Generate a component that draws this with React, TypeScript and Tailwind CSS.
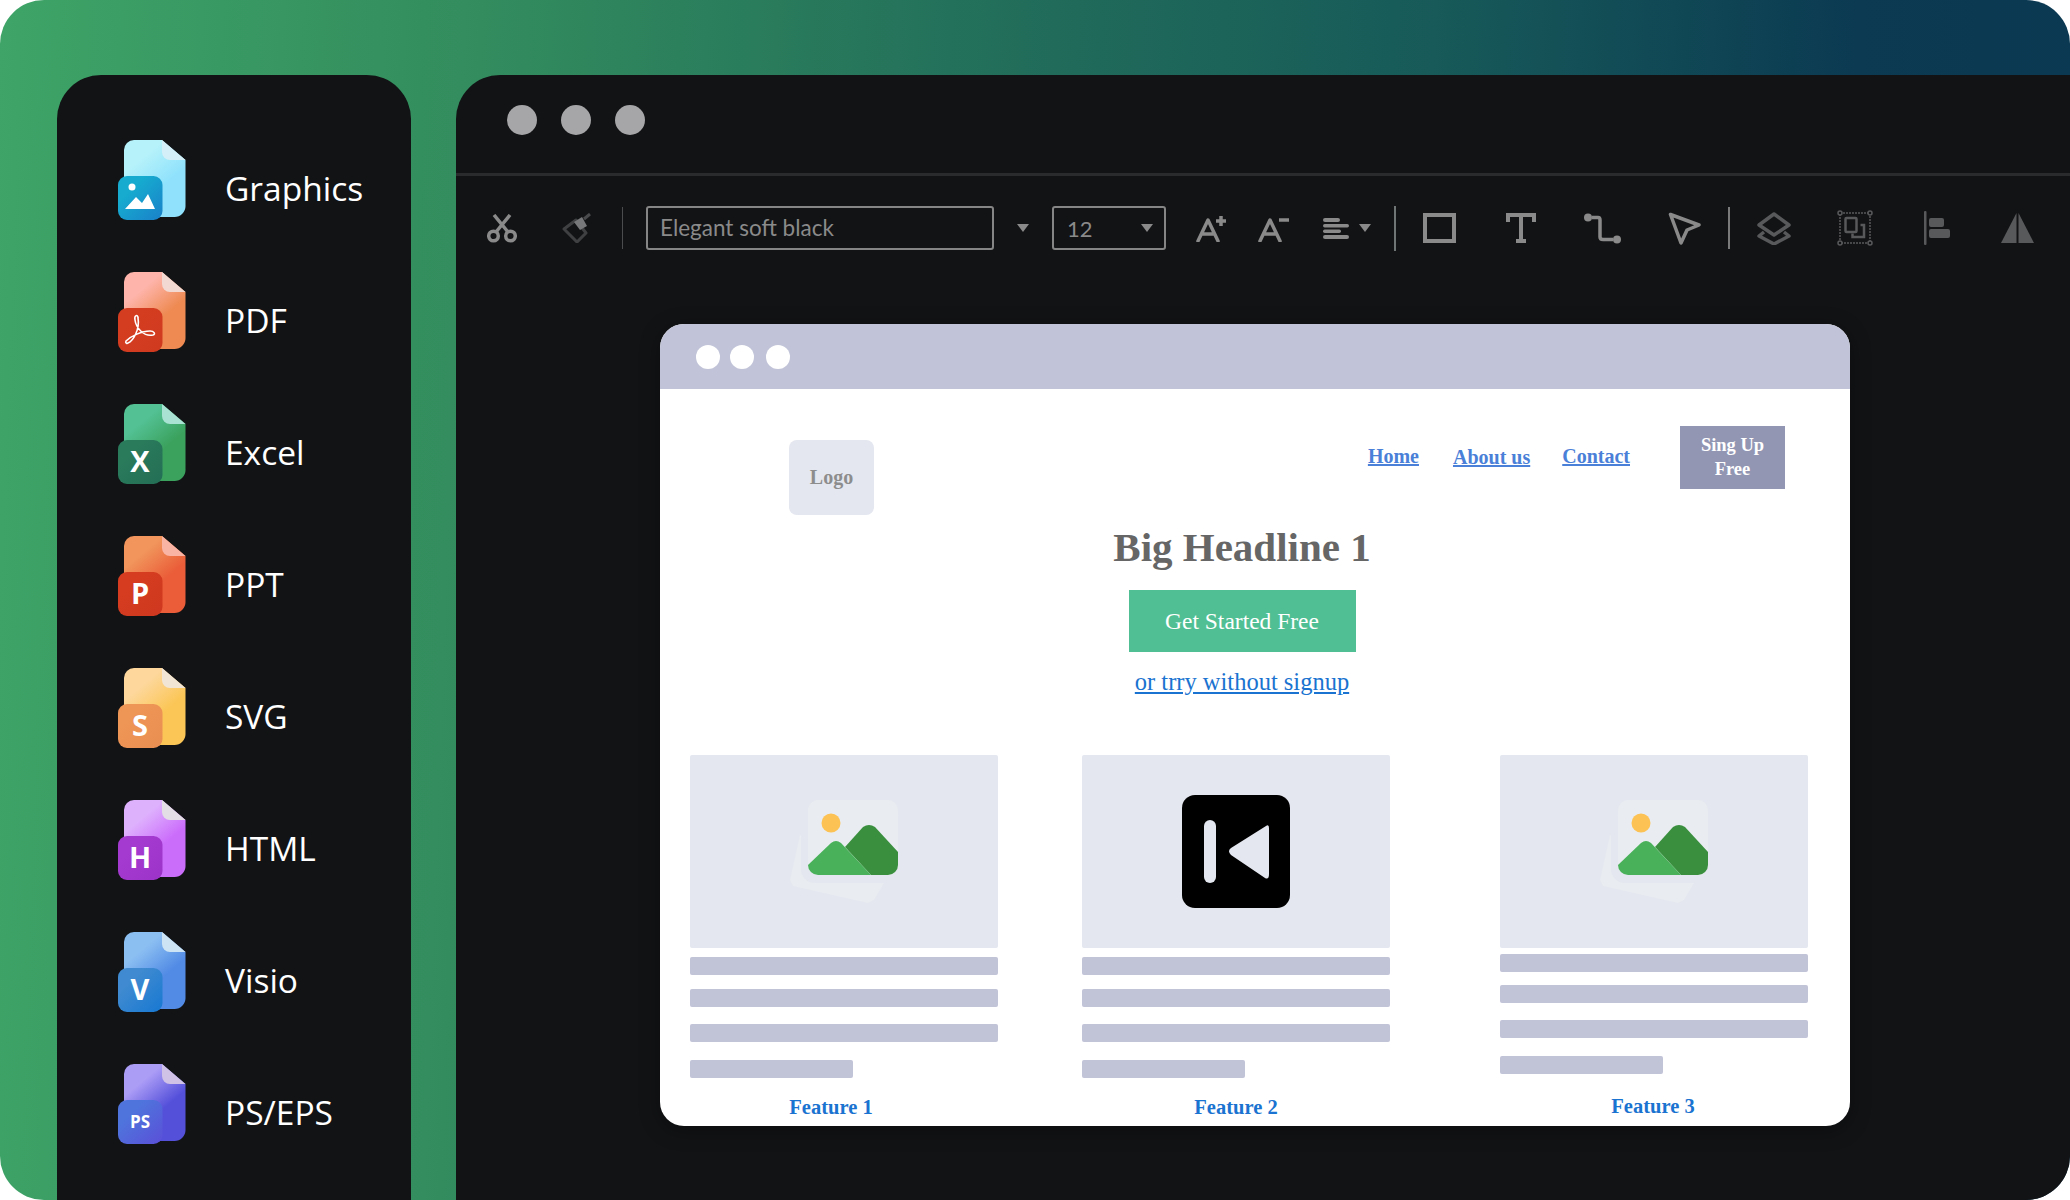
import React from "react";

const formats = [
  { name: "Graphics", top: "#b6f2fa", bottom: "#90e2fc", fold: "#d4eff7", front: "#16abcf", frontEnd: "#1a80c9", letter: "" },
  { name: "PDF", top: "#feb4aa", bottom: "#ee8a52", fold: "#f2dad2", front: "#d53d20", frontEnd: "#cf3a1f", letter: "" },
  { name: "Excel", top: "#53c194", bottom: "#3ba25e", fold: "#a9e2d2", front: "#2a7a5c", frontEnd: "#236e55", letter: "X" },
  { name: "PPT", top: "#f1955c", bottom: "#ea5d38", fold: "#fab4a4", front: "#d53c20", frontEnd: "#cf381f", letter: "P" },
  { name: "SVG", top: "#fdd79c", bottom: "#fbc656", fold: "#f1e6d6", front: "#ee9656", frontEnd: "#e98e52", letter: "S" },
  { name: "HTML", top: "#deb1fd", bottom: "#cb6dfb", fold: "#e3dee6", front: "#a53ad0", frontEnd: "#9c33c9", letter: "H" },
  { name: "Visio", top: "#8bbff2", bottom: "#528be5", fold: "#cde4f4", front: "#3f8ad0", frontEnd: "#1778d2", letter: "V" },
  { name: "PS/EPS", top: "#ab9cf6", bottom: "#5450da", fold: "#d0c1e7", front: "#4f74dc", frontEnd: "#5a4fd8", letter: "PS" },
];

type Format = (typeof formats)[number];

const FileIcon = ({ f }: { f: Format }) => {
  const id = f.name.replace("/", "");
  return (
    <svg width="68" height="80" viewBox="0 0 68 80" className="shrink-0">
      <defs>
        <linearGradient id={`${id}-doc`} x1="0.15" y1="0" x2="0.75" y2="0.9">
          <stop offset="0.25" stopColor={f.top} />
          <stop offset="0.7" stopColor={f.bottom} />
        </linearGradient>
        <linearGradient id={`${id}-front`} x1="0" y1="0" x2="1" y2="1">
          <stop offset="0.3" stopColor={f.front} />
          <stop offset="1" stopColor={f.frontEnd} />
        </linearGradient>
      </defs>
      <path d="M16 0H44L67.500 20V66a11 11 0 0 1-11 11H6V10A10 10 0 0 1 16 0Z" fill={`url(#${id}-doc)`} />
      <path d="M44 0L67.500 20H52a8 8 0 0 1-8-8Z" fill={f.fold} />
      <rect x="0" y="36" width="44.500" height="44" rx="9" fill={`url(#${id}-front)`} />
      {f.name === "Graphics" && (
        <>
          <circle cx="14" cy="47" r="3.500" fill="#fff" />
          <path d="M7 69L18 57L24 63L30 54L37 69Z" fill="#fff" />
        </>
      )}
      {f.name === "PDF" && (
        <path
          d="M10 71C15 69 22 58 20 46C20 42 16 43 17 48C18 56 26 65 35 63C38 62 36 59 32 59C24 59 13 64 8 69C7 71 9 72 10 71Z"
          fill="none"
          stroke="#fff"
          strokeWidth="1.600"
        />
      )}
      {f.letter && (
        <text
          x="22"
          y={f.letter === "PS" ? 64 : 68}
          textAnchor="middle"
          fill="#fff"
          fontFamily="'Open Sans', sans-serif"
          fontWeight="700"
          fontSize={f.letter === "PS" ? 17 : 29}
        >
          {f.letter}
        </text>
      )}
    </svg>
  );
};

const Caret = () => (
  <svg width="12" height="8" viewBox="0 0 12 8" className="shrink-0">
    <path d="M0 0H12L6 8Z" fill="#8a8a8a" />
  </svg>
);

const PlaceholderPicture = () => (
  <svg width="108" height="103" viewBox="0 0 108 103">
    <defs>
      <clipPath id="card">
        <rect x="18" y="0" width="90" height="75" rx="10" />
      </clipPath>
    </defs>
    <path d="M10 35L0 80L3 86L78 103L84 100L94 83Z" fill="#e9ecf1" />
    <rect x="11" y="0" width="97" height="83" rx="14" fill="#e4e7ef" />
    <rect x="18" y="0" width="90" height="75" rx="10" fill="#e9edf1" />
    <g clipPath="url(#card)">
      <circle cx="41" cy="23" r="9.500" fill="#fcc254" />
      <path d="M55 47L73 27Q79 23 85 27L108 52V75H81Z" fill="#3a8f3f" />
      <path d="M18 65L41 43Q46 39 51 43L81 75H18Z" fill="#48b159" />
    </g>
  </svg>
);

const SkipIcon = () => (
  <svg width="108" height="113" viewBox="0 0 108 113">
    <rect width="108" height="113" rx="13" fill="#000" />
    <rect x="22" y="25" width="12" height="63" rx="6" fill="#e4e7ef" />
    <path d="M84 31Q87 29 87 33V79Q87 85 83 83L49 60Q45 56 49 53Z" fill="#e4e7ef" />
  </svg>
);

const columns = [
  {
    label: "Feature 1",
    labelClass: "mt-[16px] pr-[26px]",
    bars: ["mt-[9px] w-full", "mt-[14px] w-full", "mt-[17px] w-full", "mt-[18px] w-[163px]"],
    icon: <PlaceholderPicture />,
    className: "",
  },
  {
    label: "Feature 2",
    labelClass: "mt-[16px]",
    bars: ["mt-[9px] w-full", "mt-[14px] w-full", "mt-[17px] w-full", "mt-[18px] w-[163px]"],
    icon: <SkipIcon />,
    className: "ml-[84px]",
  },
  {
    label: "Feature 3",
    labelClass: "mt-[19px] pr-[2px]",
    bars: ["mt-[6px] w-full", "mt-[13px] w-full", "mt-[17px] w-full", "mt-[18px] w-[163px]"],
    icon: <PlaceholderPicture />,
    className: "ml-[110px]",
  },
];

const Toolbar = () => (
  <div className="flex h-[104px] items-center">
    {/* cut */}
    <svg width="30" height="29" viewBox="0 0 30 29" className="ml-[31px] shrink-0 fill-none stroke-[#8a8a8a] stroke-[3.5px]">
      <circle cx="6.500" cy="22" r="4.800" />
      <circle cx="23.500" cy="22" r="4.800" />
      <path d="M9 18L23 1M21 18L7 1" />
    </svg>
    {/* format brush */}
    <svg width="30" height="30" viewBox="0 0 30 30" className="ml-[45px] shrink-0">
      <path d="M2 16L14 7L24 20L15 29Z" fill="none" stroke="#3f4042" strokeWidth="3" strokeLinejoin="round" />
      <path d="M12 9L20 4L25 13L18 17Z" fill="#77787a" />
      <path d="M22 6L28 1" stroke="#4a4b4d" strokeWidth="3" />
    </svg>
    <div className="ml-[30px] h-[42px] w-px bg-[#4b4c4d]" />
    <div className="ml-[23px] flex h-[44px] w-[348px] shrink-0 items-center rounded-[3px] border-2 border-[#858585] pl-[12px] text-[22.5px] text-[#8a8a8a] [font-family:Lato,sans-serif]">
      Elegant soft black
    </div>
    <div className="ml-[23px] flex shrink-0">
      <Caret />
    </div>
    <div className="ml-[23px] flex h-[44px] w-[114px] shrink-0 items-center justify-between rounded-[3px] border-2 border-[#858585] pl-[13px] pr-[11px] text-[22px] text-[#8a8a8a] [font-family:Lato,sans-serif]">
      12
      <Caret />
    </div>
    {/* font bigger */}
    <svg width="31" height="27" viewBox="0 0 31 27" className="ml-[30px] shrink-0 fill-none stroke-[#8a8a8a]">
      <path d="M2 26L12 5L22 26M6 19H18" strokeWidth="3.500" strokeLinecap="round" strokeLinejoin="round" />
      <path d="M25 1V11M20 6H30" strokeWidth="3.500" />
    </svg>
    {/* font smaller */}
    <svg width="31" height="27" viewBox="0 0 31 27" className="ml-[31px] shrink-0 fill-none stroke-[#8a8a8a]">
      <path d="M2 26L12 5L22 26M6 19H18" strokeWidth="3.500" strokeLinecap="round" strokeLinejoin="round" />
      <path d="M21 5H31" strokeWidth="3.500" />
    </svg>
    {/* align */}
    <svg width="26" height="21" viewBox="0 0 26 21" className="ml-[34px] shrink-0 fill-[#8a8a8a]">
      <rect x="0" y="0" width="17" height="4" rx="2" />
      <rect x="0" y="6" width="26" height="3.500" rx="1.700" />
      <rect x="0" y="11.500" width="18" height="3.500" rx="1.700" />
      <rect x="0" y="17" width="26" height="4" rx="2" />
    </svg>
    <div className="ml-[10px] flex shrink-0">
      <Caret />
    </div>
    <div className="ml-[23px] h-[45px] w-[2px] bg-[#6f7475]" />
    {/* shape */}
    <svg width="33" height="30" viewBox="0 0 33 30" className="ml-[27px] shrink-0 fill-none stroke-[#8a8a8a] stroke-[4px]">
      <rect x="2" y="2" width="29" height="26" />
    </svg>
    {/* text */}
    <svg width="30" height="30" viewBox="0 0 30 30" className="ml-[50px] shrink-0 fill-none stroke-[#8a8a8a] stroke-[4px]">
      <path d="M2 9V2H28V9M15 2V28M10 28H20" />
    </svg>
    {/* connector */}
    <svg width="37" height="31" viewBox="0 0 37 31" className="ml-[48px] shrink-0 fill-none stroke-[#8a8a8a]">
      <circle cx="4" cy="4.500" r="4" fill="#8a8a8a" stroke="none" />
      <circle cx="33" cy="26.500" r="4" fill="#8a8a8a" stroke="none" />
      <path d="M8 4.500H14Q16 4.500 16 7V24Q16 26.500 19 26.500H29" strokeWidth="3.500" />
    </svg>
    {/* pointer */}
    <svg width="33" height="33" viewBox="0 0 33 33" className="ml-[47px] shrink-0 fill-none stroke-[#8a8a8a]">
      <path d="M2.500 2.500L31 13L19 18L13 31Z" strokeWidth="3.500" strokeLinejoin="round" />
    </svg>
    <div className="ml-[27px] h-[42px] w-[2px] bg-[#7a7a7a]" />
    {/* layers */}
    <svg width="34" height="33" viewBox="0 0 34 33" className="ml-[27px] shrink-0 fill-none stroke-[#58595b]">
      <path d="M17 2L32 13L17 23L2 13Z" strokeWidth="3.500" strokeLinejoin="round" />
      <path d="M7 20L2 24L17 32L32 24L27 20" strokeWidth="3.500" strokeLinejoin="round" />
    </svg>
    {/* group */}
    <svg width="36" height="36" viewBox="0 0 36 36" className="ml-[46px] shrink-0 fill-none stroke-[#58595b]">
      <rect x="3" y="3" width="30" height="30" strokeWidth="1.500" strokeDasharray="2 1" />
      <circle cx="3" cy="3" r="2" strokeWidth="1.500" fill="#121315" />
      <circle cx="33" cy="3" r="2" strokeWidth="1.500" fill="#121315" />
      <circle cx="3" cy="33" r="2" strokeWidth="1.500" fill="#121315" />
      <circle cx="33" cy="33" r="2" strokeWidth="1.500" fill="#121315" />
      <rect x="8.500" y="8" width="11" height="14" rx="1" strokeWidth="2.500" />
      <path d="M23.500 15H27V27H15.500V23.500" strokeWidth="2.500" />
    </svg>
    {/* align left */}
    <svg width="26" height="34" viewBox="0 0 26 34" className="ml-[51px] shrink-0 fill-[#58595b]">
      <rect x="0" y="0" width="2.500" height="34" rx="1" />
      <rect x="5" y="7" width="15" height="9" rx="2" />
      <rect x="5" y="18" width="21" height="9" rx="2" />
    </svg>
    {/* flip */}
    <svg width="33" height="30" viewBox="0 0 33 30" className="ml-[51px] shrink-0 fill-[#58595b]">
      <path d="M15.500 0V30H0Z" />
      <path d="M17.500 0V30H33Z" />
    </svg>
  </div>
);

const Document = () => (
  <div className="ml-[204px] mt-[44px] h-[802px] w-[1190px] overflow-hidden rounded-[24px] bg-white shadow-[0_4px_20px_rgba(0,0,0,0.35)] [font-family:'Liberation_Serif',serif]">
    <div className="flex h-[65px] items-center bg-[#c1c4d8] pl-[36px]">
      <div className="h-[24px] w-[24px] rounded-full bg-white" />
      <div className="ml-[10px] h-[24px] w-[24px] rounded-full bg-white" />
      <div className="ml-[12px] h-[24px] w-[24px] rounded-full bg-white" />
    </div>

    <div className="flex pt-[37px]">
      <div className="ml-[129px] mt-[14px] flex h-[75px] w-[85px] items-center justify-center rounded-[8px] bg-[#e4e7ef] pb-[2px] text-[20px] font-bold text-[#8d8d8d]">
        Logo
      </div>
      <div className="ml-auto mr-[65px] flex items-start">
        <a className="mt-[17px] text-[20px] font-bold leading-[26px] text-[#4a80d8] underline">Home</a>
        <a className="ml-[34px] mt-[18px] text-[20px] font-bold leading-[26px] text-[#4a80d8] underline">About us</a>
        <a className="ml-[32px] mt-[17px] text-[20px] font-bold leading-[26px] text-[#4a80d8] underline">Contact</a>
        <div className="ml-[50px] flex h-[63px] w-[105px] items-center justify-center bg-[#9296b3] pb-[1px] text-center text-[18.500px] font-bold leading-[24px] text-white">
          Sing Up
          <br />
          Free
        </div>
      </div>
    </div>

    <div className="flex flex-col items-center pr-[26px]">
      <h1 className="mt-[8px] text-[41px] font-bold leading-[48px] text-[#666666]">Big Headline 1</h1>
      <div className="mt-[19px] flex h-[62px] w-[227px] items-center justify-center bg-[#50bf93] pt-[2px] text-[23.500px] text-white">
        Get Started Free
      </div>
      <a className="mt-[15px] text-[24.500px] leading-[30px] text-[#1a73d0] underline">or trry without signup</a>
    </div>

    <div className="mt-[58px] flex pl-[30px]">
      {columns.map((col) => (
        <div key={col.label} className={`w-[308px] shrink-0 ${col.className}`}>
          <div className="flex h-[193px] items-center justify-center rounded-[2px] bg-[#e4e7ef]">{col.icon}</div>
          {col.bars.map((bar, i) => (
            <div key={i} className={`h-[18px] rounded-[2px] bg-[#c1c3d7] ${bar}`} />
          ))}
          <div className={`text-center text-[20.500px] font-bold leading-[26px] text-[#1a73d0] ${col.labelClass}`}>
            {col.label}
          </div>
        </div>
      ))}
    </div>
  </div>
);

const App: React.FC = () => {
  return (
    <div className="h-[1200px] w-[2070px] overflow-hidden bg-white">
      <div className="flex h-[1200px] w-[2070px] gap-[45px] overflow-hidden rounded-[44px] bg-[linear-gradient(92deg,#3ea467_0%,#338d5e_22%,#206b5a_50%,#175a59_68%,#0b3a52_88%,#0b3852_100%)] pl-[57px] pt-[75px]">
        <aside className="h-[1125px] w-[354px] shrink-0 rounded-t-[44px] bg-[#121315] pl-[61px] pt-[65px] [font-family:'Open_Sans',sans-serif]">
          {formats.map((f) => (
            <div key={f.name} className="flex h-[132px] items-start">
              <FileIcon f={f} />
              <span className="ml-[39px] mt-[20px] text-[33.500px] leading-[56px] text-white">{f.name}</span>
            </div>
          ))}
        </aside>
        <main className="h-[1125px] flex-1 rounded-tl-[44px] bg-[#121315]">
          <div className="flex h-[101px] items-center gap-[24px] border-b-[3px] border-[#2a2b2d] pb-[8px] pl-[51px]">
            <div className="h-[30px] w-[30px] rounded-full bg-[#a6a6a8]" />
            <div className="h-[30px] w-[30px] rounded-full bg-[#a6a6a8]" />
            <div className="h-[30px] w-[30px] rounded-full bg-[#a6a6a8]" />
          </div>
          <Toolbar />
          <Document />
        </main>
      </div>
    </div>
  );
};

export default App;
